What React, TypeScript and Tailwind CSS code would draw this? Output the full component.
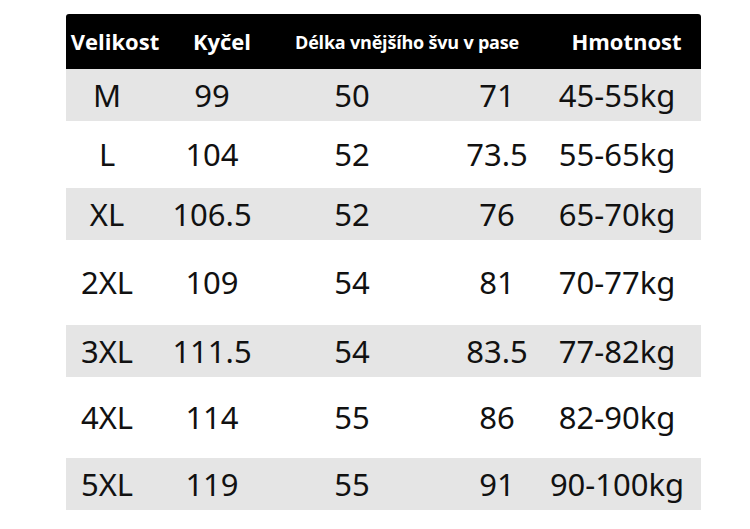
const rows = [
  { size: "M", hip: "99", seam: "50", waist: "71", weight: "45-55kg", h: "h-[52px]", gray: true },
  { size: "L", hip: "104", seam: "52", waist: "73.5", weight: "55-65kg", h: "h-[67px]", gray: false },
  { size: "XL", hip: "106.5", seam: "52", waist: "76", weight: "65-70kg", h: "h-[52px]", gray: true },
  { size: "2XL", hip: "109", seam: "54", waist: "81", weight: "70-77kg", h: "h-[85px]", gray: false },
  { size: "3XL", hip: "111.5", seam: "54", waist: "83.5", weight: "77-82kg", h: "h-[52px]", gray: true },
  { size: "4XL", hip: "114", seam: "55", waist: "86", weight: "82-90kg", h: "h-[81px]", gray: false },
  { size: "5XL", hip: "119", seam: "55", waist: "91", weight: "90-100kg", h: "h-[52px]", gray: true },
];

const headFont = { fontFamily: '"Open Sans", "Noto Sans", sans-serif' };
const bodyFont = { fontFamily: '"Noto Sans", "Open Sans", sans-serif' };

function Cell({ children }: { children: string }) {
  return (
    <div className="flex justify-center whitespace-nowrap">
      <span>{children}</span>
    </div>
  );
}

export default function App() {
  return (
    <div className="min-h-[529px] w-[750px] bg-white pt-[14px] pl-[66px]">
      <div className="w-[635px]">
        <div
          className="grid h-[55px] grid-cols-[98px_116px_254px_1fr] items-center rounded-t-[3px] bg-black font-bold text-white"
          style={headFont}
        >
          <div className="text-center text-[22px]">Velikost</div>
          <div className="text-center text-[22px]">Kyčel</div>
          <div className="pt-[2px] text-center text-[18px] tracking-[-0.2px]">Délka vnějšího švu v pase</div>
          <div className="pl-[18px] text-center text-[22px]">Hmotnost</div>
        </div>

        {rows.map((r) => (
          <div
            key={r.size}
            className={`grid grid-cols-[82px_128px_152px_138px_102px_1fr] items-center text-[31px] leading-none text-[#111] ${r.h} ${
              r.gray ? "bg-[#e5e5e5]" : "bg-white"
            }`}
            style={bodyFont}
          >
            <Cell>{r.size}</Cell>
            <Cell>{r.hip}</Cell>
            <Cell>{r.seam}</Cell>
            <Cell>{r.waist}</Cell>
            <Cell>{r.weight}</Cell>
            <div />
          </div>
        ))}
      </div>
    </div>
  );
}
